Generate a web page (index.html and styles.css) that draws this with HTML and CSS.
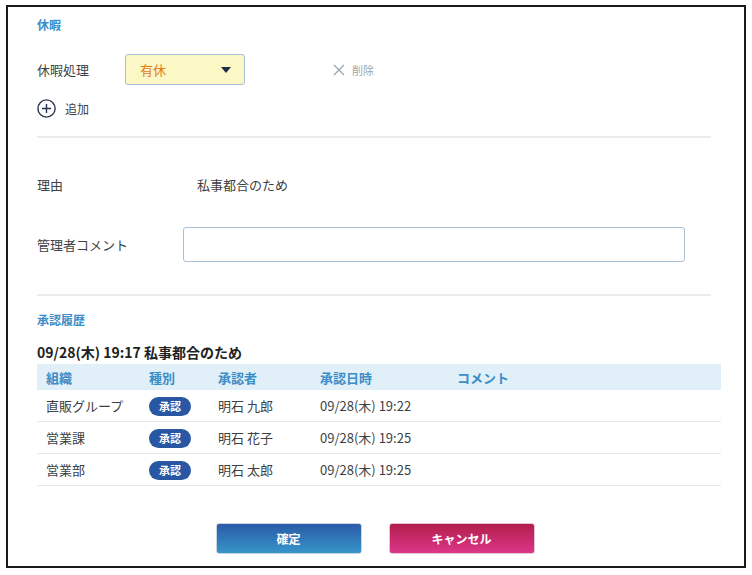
FILE: index.html
```html
<!DOCTYPE html>
<html lang="ja">
<head>
<meta charset="UTF-8">
<title>休暇申請</title>
<link rel="stylesheet" href="styles.css">
</head>
<body>

<div class="dialog">

    <h2 class="section-title">休暇</h2>

    <div class="leave-row">
        <span class="label">休暇処理</span>
        <div class="select">
            <span class="select-value">有休</span>
            <span class="select-arrow"></span>
        </div>
        <span class="delete">
            <svg width="12" height="12" viewBox="0 0 12 12"><path d="M1 1L11 11M11 1L1 11" stroke="#9aa6b2" stroke-width="1.3" fill="none"/></svg>
            削除
        </span>
    </div>

    <div class="add-row">
        <svg width="19" height="19" viewBox="0 0 19 19"><circle cx="9.5" cy="9.5" r="8.6" stroke="#27344d" stroke-width="1.4" fill="none"/><path d="M9.5 5v9M5 9.5h9" stroke="#27344d" stroke-width="1.4"/></svg>
        <span>追加</span>
    </div>

    <hr class="divider">

    <div class="reason-row">
        <span class="label reason-label">理由</span>
        <span class="reason-value">私事都合のため</span>
    </div>

    <div class="comment-row">
        <span class="label comment-label">管理者コメント</span>
        <input type="text" class="comment-input">
    </div>

    <hr class="divider">

    <h2 class="section-title history-title">承認履歴</h2>

    <div class="request-title">09/28(木) 19:17 私事都合のため</div>

    <table class="history">
        <thead>
            <tr>
                <th class="col-org">組織</th>
                <th class="col-type">種別</th>
                <th class="col-user">承認者</th>
                <th class="col-date">承認日時</th>
                <th>コメント</th>
            </tr>
        </thead>
        <tbody>
            <tr>
                <td>直販グループ</td>
                <td><span class="badge">承認</span></td>
                <td>明石 九郎</td>
                <td>09/28(木) 19:22</td>
                <td></td>
            </tr>
            <tr>
                <td>営業課</td>
                <td><span class="badge">承認</span></td>
                <td>明石 花子</td>
                <td>09/28(木) 19:25</td>
                <td></td>
            </tr>
            <tr>
                <td>営業部</td>
                <td><span class="badge">承認</span></td>
                <td>明石 太郎</td>
                <td>09/28(木) 19:25</td>
                <td></td>
            </tr>
        </tbody>
    </table>

    <div class="buttons">
        <button class="btn btn-ok">確定</button>
        <button class="btn btn-cancel">キャンセル</button>
    </div>

</div>

</body>
</html>
```

FILE: styles.css
```css
body, html {
    margin: 0;
    padding: 0;
    background: #fff;
}

body {
    font-family: "Noto Sans CJK JP", "Noto Sans", sans-serif;
    font-size: 13px;
    color: #3c3f44;
}

.dialog {
    box-sizing: border-box;
    width: 740px;
    height: 563px;
    margin: 5px 0 0 6px;
    border: 2px solid #1a1a1a;
    padding: 8px 23px 0 29px;
}

.section-title {
    margin: 0;
    font-size: 12px;
    font-weight: bold;
    line-height: 20px;
    color: #3b8dc7;
}

.label {
    color: #3c3f44;
}

.leave-row {
    display: flex;
    align-items: center;
    margin-top: 19px;
    height: 31px;
}

.leave-row .label {
    width: 88px;
}

.select {
    box-sizing: border-box;
    width: 120px;
    height: 31px;
    display: flex;
    align-items: center;
    justify-content: space-between;
    padding: 0 13px 0 14px;
    background: #fbf8c6;
    border: 1px solid #a9c0d6;
    border-radius: 3px;
}

.select-value {
    color: #e27a16;
}

.select-arrow {
    width: 0;
    height: 0;
    border-left: 5.5px solid transparent;
    border-right: 5.5px solid transparent;
    border-top: 6px solid #1c2c48;
}

.delete {
    display: flex;
    align-items: center;
    gap: 7px;
    margin-left: 88px;
    font-size: 11px;
    color: #9aa6b2;
}

.add-row {
    display: flex;
    align-items: center;
    gap: 9px;
    margin-top: 14px;
    height: 19px;
    font-size: 12px;
}

.divider {
    border: none;
    border-top: 2px solid #eaedf0;
    margin: 18px 10px 0 0;
}

.reason-row {
    display: flex;
    align-items: center;
    margin-top: 36px;
    height: 20px;
}

.reason-label {
    width: 160px;
}

.comment-row {
    display: flex;
    align-items: center;
    margin-top: 33px;
    height: 35px;
}

.comment-label {
    width: 146px;
}

.comment-input {
    box-sizing: border-box;
    width: 502px;
    height: 35px;
    border: 1px solid #a9c0d6;
    border-radius: 3px;
    background: #fff;
}

.comment-row + .divider {
    margin-top: 32px;
}

.history-title {
    margin-top: 14px;
}

.request-title {
    margin-top: 12px;
    font-size: 14px;
    font-weight: bold;
    line-height: 20px;
    color: #222;
}

.history {
    width: 100%;
    border-collapse: collapse;
    margin-top: 2px;
}

.history th {
    height: 26px;
    padding: 0 0 0 9px;
    text-align: left;
    font-weight: bold;
    color: #3b8dc7;
    background: #e1f0f8;
}

.history td {
    height: 31px;
    padding: 0 0 0 9px;
    border-bottom: 1px solid #e6e9ec;
    color: #3c3f44;
}

.col-org { width: 94px; }
.col-type { width: 60px; }
.col-user { width: 93px; }
.col-date { width: 128px; }

.badge {
    display: inline-block;
    width: 42px;
    height: 19px;
    line-height: 19px;
    border-radius: 10px;
    background: #2a57a3;
    color: #fff;
    font-size: 11px;
    font-weight: bold;
    text-align: center;
    vertical-align: middle;
}

.buttons {
    display: flex;
    justify-content: center;
    gap: 27px;
    margin: 37px 0 0 -8px;
}

.btn {
    width: 146px;
    height: 31px;
    border: 1px solid #c9d6e2;
    border-radius: 3px;
    color: #fff;
    font-family: inherit;
    font-size: 12px;
    font-weight: bold;
    cursor: pointer;
}

.btn-ok {
    background: linear-gradient(#2b5ba7, #3795c9);
}

.btn-cancel {
    border-color: #e4c6d2;
    background: linear-gradient(#b21f4c, #dc3689);
}
```
